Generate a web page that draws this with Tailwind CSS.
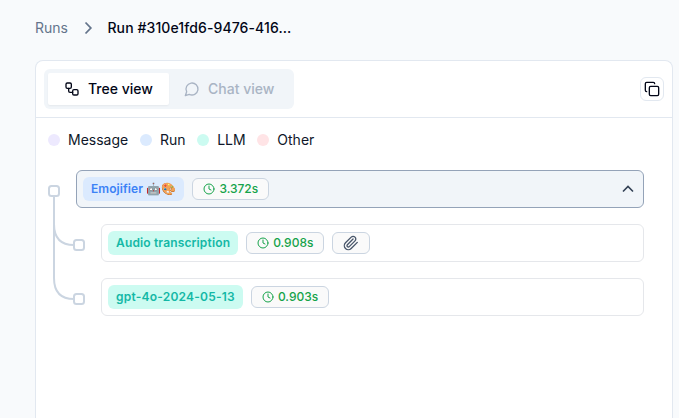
<!DOCTYPE html>
<html lang="en">
<head>
<meta charset="utf-8">
<title>Run</title>
<script src="https://cdn.jsdelivr.net/npm/@tailwindcss/browser@4"></script>
</head>
<body class="flex h-screen flex-col overflow-hidden bg-[#f8fafc] pl-[35px] pr-[6px] font-[Inter,sans-serif] text-sm text-[#0f172a]">
<nav class="flex h-[60px] shrink-0 items-center pb-1">
  <a class="text-[#64748b]">Runs</a>
  <svg class="ml-3 size-4 text-[#64748b]" viewBox="0 0 16 16" fill="none" stroke="currentColor" stroke-width="1.8"><path d="M5.5 2.500l5.300 5.500-5.300 5.500"/></svg>
  <span class="ml-[11.500px] font-medium tracking-[0.1px] text-[#020617]">Run #310e1fd6-9476-416...</span>
</nav>
<main class="grow rounded-t-lg border border-b-0 border-[#e2e8f0] bg-white">
  <header class="flex h-[57px] items-center justify-between border-b border-[#e2e8f0] pr-2 pl-2">
    <div class="flex h-10 w-[250px] items-center rounded-md bg-[#f1f5f9] p-1 font-medium">
      <button class="flex h-8 w-[121px] items-center rounded-xs bg-white pl-4 text-[#020617] shadow-xs">
        <svg class="mr-2 size-4" viewBox="0 0 24 24" fill="none" stroke="currentColor" stroke-width="2" stroke-linecap="round" stroke-linejoin="round"><rect x="3" y="3" width="8" height="8" rx="2"/><path d="M7 11v4a2 2 0 0 0 2 2h4"/><rect x="13" y="13" width="8" height="8" rx="2"/></svg>Tree view</button>
      <button class="flex h-8 items-center pl-[15px] text-[#a9b4c4]">
        <svg class="mr-2 size-4" viewBox="0 0 24 24" fill="none" stroke="currentColor" stroke-width="2" stroke-linecap="round" stroke-linejoin="round"><path d="M7.9 20A9 9 0 1 0 4 16.1L2 22Z"/></svg>Chat view</button>
    </div>
    <button class="flex size-6 items-center justify-center rounded-md border border-[#e2e8f0] bg-white">
      <svg class="size-4 shrink-0 text-[#020617]" viewBox="0 0 24 24" fill="none" stroke="currentColor" stroke-width="2" stroke-linecap="round" stroke-linejoin="round"><rect x="8" y="8" width="14" height="14" rx="2"/><path d="M4 16c-1.100 0-2-.9-2-2V4c0-1.100.9-2 2-2h10c1.100 0 2 .9 2 2"/></svg>
    </button>
  </header>
  <div class="flex h-[44px] items-center gap-[11.700px] pl-3">
    <div class="flex items-center gap-2"><i class="size-3 rounded-full bg-[#ede9fe]"></i>Message</div>
    <div class="flex items-center gap-2"><i class="size-3 rounded-full bg-[#dbeafe]"></i>Run</div>
    <div class="flex items-center gap-2"><i class="size-3 rounded-full bg-[#ccfbf1]"></i>LLM</div>
    <div class="flex items-center gap-2"><i class="size-3 rounded-full bg-[#ffe4e6]"></i>Other</div>
  </div>
  <section class="grid pt-2 pr-7 pl-3 text-xs">
    <svg class="col-start-1 row-start-1 h-[146px] w-[38px]" viewBox="0 0 38 146" fill="none" stroke="#cbd5e1" stroke-width="2"><path d="M6 26V108Q6 129 26 129M6 54Q6 75 26 75"/><rect x="1" y="16" width="10" height="10" rx="2.500" fill="white"/><rect x="26" y="70" width="10" height="10" rx="2.500" fill="white"/><rect x="26" y="124" width="10" height="10" rx="2.500" fill="white"/></svg>
    <div class="col-start-1 row-start-1 flex flex-col gap-4 pl-7">
      <div class="flex h-[38px] items-center gap-2 rounded-md border border-[#94a3b8] bg-[#f1f5f9] px-1.5">
        <span class="flex h-6 items-center rounded-md bg-[#dbeafe] px-2 font-semibold tracking-[0.08px] whitespace-pre text-[#3b82f6]">Emojifier 🤖🎨</span>
        <span class="flex h-[22px] items-center gap-1 rounded-md border border-[#cbd5e1] bg-[#fafafa] px-2.5 font-medium text-[#16a34a]"><svg class="size-3" viewBox="0 0 24 24" fill="none" stroke="currentColor" stroke-width="2" stroke-linecap="round" stroke-linejoin="round"><circle cx="12" cy="12" r="10"/><path d="M12 6v6l4 2"/></svg>3.372s</span>
        <svg class="mr-px ml-auto size-4 text-[#334155]" viewBox="0 0 16 16" fill="none" stroke="currentColor" stroke-width="1.600"><path d="M3 10.500l5-5 5 5"/></svg>
      </div>
      <div class="ml-[25px] flex h-[38px] items-center gap-2 rounded-md border border-[#e5e7eb] bg-white px-1.5">
        <span class="flex h-6 items-center rounded-md bg-[#ccfbf1] px-2 font-semibold tracking-[0.15px] text-[#14b8a6]">Audio transcription</span>
        <span class="flex h-[22px] items-center gap-1 rounded-md border border-[#cbd5e1] bg-[#fafafa] px-2.5 font-medium text-[#16a34a]"><svg class="size-3" viewBox="0 0 24 24" fill="none" stroke="currentColor" stroke-width="2" stroke-linecap="round" stroke-linejoin="round"><circle cx="12" cy="12" r="10"/><path d="M12 6v6l4 2"/></svg>0.908s</span>
        <span class="flex h-[22px] w-[38px] items-center justify-center rounded-md border border-[#cbd5e1] bg-[#fafafa] text-[#475569]"><svg class="size-4" viewBox="0 0 24 24" fill="none" stroke="currentColor" stroke-width="2" stroke-linecap="round" stroke-linejoin="round"><path d="m21.440 11.050-9.190 9.190a6 6 0 0 1-8.490-8.490l8.570-8.570A4 4 0 1 1 18 8.840l-8.590 8.570a2 2 0 0 1-2.830-2.830l8.490-8.480"/></svg></span>
      </div>
      <div class="ml-[25px] flex h-[38px] items-center gap-2 rounded-md border border-[#e5e7eb] bg-white px-1.5">
        <span class="flex h-6 items-center rounded-md bg-[#ccfbf1] px-2 font-semibold tracking-[0.22px] text-[#14b8a6]">gpt-4o-2024-05-13</span>
        <span class="flex h-[22px] items-center gap-1 rounded-md border border-[#cbd5e1] bg-[#fafafa] px-2.5 font-medium text-[#16a34a]"><svg class="size-3" viewBox="0 0 24 24" fill="none" stroke="currentColor" stroke-width="2" stroke-linecap="round" stroke-linejoin="round"><circle cx="12" cy="12" r="10"/><path d="M12 6v6l4 2"/></svg>0.903s</span>
      </div>
    </div>
  </section>
</main>
</body>
</html>
